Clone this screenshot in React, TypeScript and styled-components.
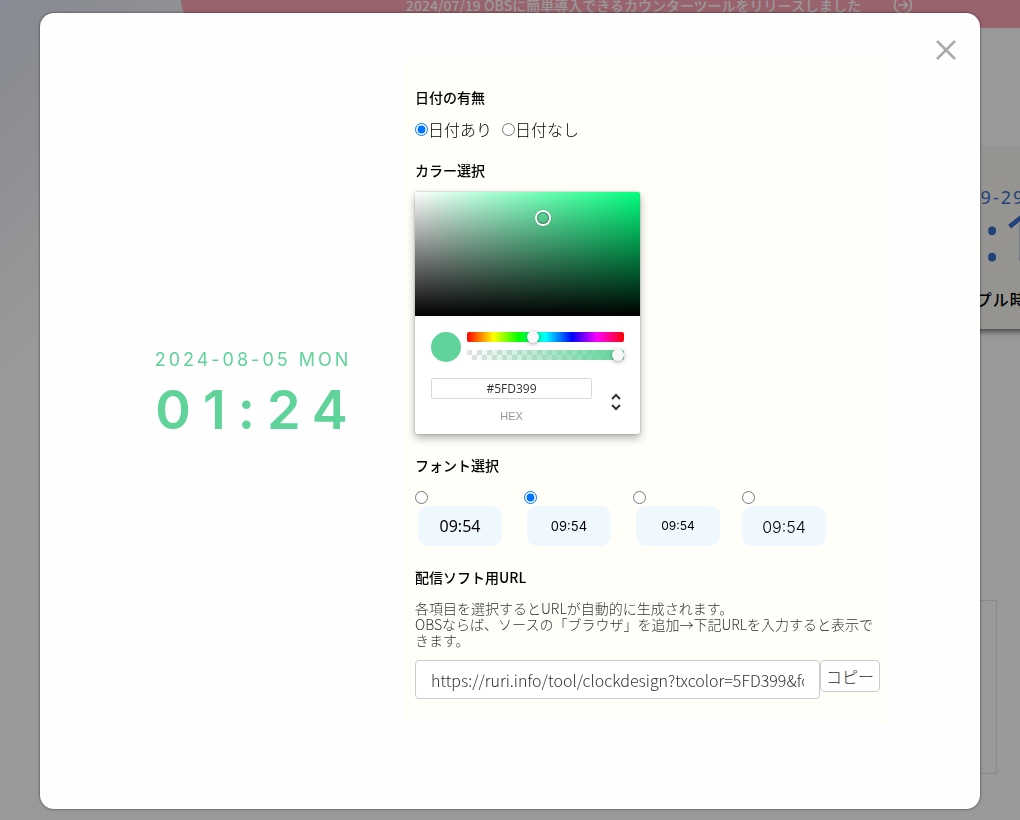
import React, { useState } from 'react';
import styled, { createGlobalStyle } from 'styled-components';

const jp = `'Noto Sans CJK JP', sans-serif`;
const accent = '#5fd399';

const GlobalStyle = createGlobalStyle`
  *, *::before, *::after { box-sizing: border-box; }
  html, body { margin: 0; height: 100%; }
  body { font-family: ${jp}; font-size: 16px; color: #000; overflow: hidden; }
  #root { height: 100%; }
  input, button { font-family: inherit; }
`;

const Page = styled.div`
  min-height: 100%;
  overflow: hidden;
  background: linear-gradient(135deg, #e1e8f8 0, #e8ebf4 70px, #fff 260px);
`;

const News = styled.a`
  display: flex;
  justify-content: center;
  align-items: flex-start;
  gap: 32px;
  height: 28px;
  margin-left: 181px;
  padding-left: 118px;
  border-bottom-left-radius: 28px;
  background: #ffa5b7;
  color: #fff;
  font-size: 14px;
  font-weight: 500;
  line-height: 10px;
  text-decoration: none;
  white-space: nowrap;
`;

const NewsIcon = styled.svg`
  width: 20px;
  height: 20px;
  margin-top: -5px;
`;

const SampleCard = styled.section`
  width: 300px;
  height: 181px;
  margin: 120px -123px 0 auto;
  padding-top: 36px;
  background: #f8f7f1;
  box-shadow: 0 3px 5px rgba(0, 0, 0, 0.5);
  white-space: nowrap;
  text-align: center;
  color: #376ecb;
  font-family: 'Noto Sans', sans-serif;
`;

const SampleDate = styled.div`
  font-size: 18px;
  line-height: 26px;
  letter-spacing: 2px;
`;

const SampleTime = styled.div`
  font-size: 64px;
  line-height: 54px;
  letter-spacing: 2px;
`;

const SampleName = styled.div`
  margin-top: 23px;
  color: #000;
  font: 500 16px/24px ${jp};
  letter-spacing: 1px;
`;

const OutlineBox = styled.div`
  height: 174px;
  margin: 271px 23px 0 181px;
  border: 1px solid #e4e4e4;
`;

const Overlay = styled.div`
  position: fixed;
  inset: 0;
  display: flex;
  padding: 13px 40px 11px;
  background: rgba(0, 0, 0, 0.4);
`;

const Modal = styled.main`
  position: relative;
  flex: 1;
  display: grid;
  grid-template-columns: minmax(0, 307fr) minmax(0, 485fr);
  align-items: start;
  padding: 44px 90px 78px 58px;
  border-radius: 14px;
  background: #fefefe;
  box-shadow: 0 0 3px rgba(0, 0, 0, 0.6);
`;

const CloseButton = styled.button`
  position: absolute;
  top: 23px;
  right: 20px;
  display: grid;
  place-items: center;
  width: 28px;
  height: 28px;
  padding: 0;
  border: 0;
  background: none;
  cursor: pointer;
`;

const Preview = styled.div`
  align-self: center;
  color: ${accent};
  text-align: center;
  font-family: Inter, sans-serif;
  white-space: nowrap;
`;

const PreviewDate = styled.div`
  font-size: 18px;
  line-height: 24px;
  letter-spacing: 3px;
  text-indent: 3px;
`;

const PreviewTime = styled.div`
  margin-top: 8px;
  font-size: 54px;
  font-weight: 600;
  line-height: 60px;
  letter-spacing: 12px;
  text-indent: 12px;
`;

const Panel = styled.form`
  display: flex;
  flex-direction: column;
  gap: 21px;
  padding: 30px 10px 24px;
  background: #fffef8;
`;

const Heading = styled.h2`
  margin: 0 0 12px;
  font-size: 14px;
  font-weight: 500;
  line-height: 20px;
`;

const Radio = styled.input`
  width: 13px;
  height: 13px;
  margin: 0;
`;

const DateChoices = styled.div`
  display: flex;
  gap: 10px;
`;

const DateLabel = styled.label`
  display: flex;
  align-items: center;
  font-weight: 300;
  line-height: 20px;
`;

const Picker = styled.div`
  width: 225px;
  border-radius: 2px;
  background: #fff;
  box-shadow: 0 0 2px rgba(0, 0, 0, 0.3), 0 4px 8px rgba(0, 0, 0, 0.3);
`;

const Saturation = styled.div`
  position: relative;
  height: 124px;
  border-radius: 2px 2px 0 0;
  background:
    linear-gradient(to top, #000, rgba(0, 0, 0, 0)),
    linear-gradient(to right, #fff, rgba(255, 255, 255, 0)),
    #00ff7f;
`;

const SaturationHandle = styled.span`
  position: absolute;
  left: 54%;
  top: 16%;
  width: 12px;
  height: 12px;
  border-radius: 50%;
  box-shadow: 0 0 0 2px #fff, inset 0 0 1px 1px rgba(0, 0, 0, 0.3), 0 0 1px 2px rgba(0, 0, 0, 0.4);
`;

const PickerBody = styled.div`
  padding: 16px 16px 12px;
`;

const PickerRow = styled.div`
  display: flex;
  gap: 6px;
`;

const Swatch = styled.div`
  width: 30px;
  height: 30px;
  border-radius: 50%;
  background: ${accent};
`;

const Sliders = styled.div`
  flex: 1;
  display: grid;
  gap: 8px;
  align-content: start;
`;

const Slider = styled.input<{ $track: string }>`
  appearance: none;
  display: block;
  width: 100%;
  height: 10px;
  margin: 0;
  border-radius: 2px;
  background: ${(p) => p.$track};
  &::-webkit-slider-thumb {
    appearance: none;
    width: 12px;
    height: 12px;
    border-radius: 50%;
    background: #f8f8f8;
    box-shadow: 0 1px 4px rgba(0, 0, 0, 0.37);
  }
`;

const hueTrack = 'linear-gradient(to right, #f00 0%, #ff0 17%, #0f0 33%, #0ff 50%, #00f 67%, #f0f 83%, #f00 100%)';
const alphaTrack = `linear-gradient(to right, rgba(95, 211, 153, 0), ${accent}), repeating-conic-gradient(#fff 0 25%, #e1e1e1 0 50%) 0 0 / 10px 10px`;

const HexRow = styled.div`
  display: flex;
  align-items: flex-start;
  padding-top: 16px;
`;

const HexLabel = styled.label`
  flex: 1;
  color: #969696;
  font: 11px/12px 'Liberation Sans', sans-serif;
  text-align: center;
`;

const HexInput = styled.input`
  display: block;
  width: 100%;
  height: 21px;
  margin-bottom: 11px;
  padding: 0;
  border: 1px solid #dadada;
  border-radius: 2px;
  background: #fff;
  color: #333;
  font: 12px/19px 'Open Sans', sans-serif;
  text-align: center;
`;

const ModeButton = styled.button`
  width: 32px;
  height: 40px;
  padding: 8px 0 0 16px;
  border: 0;
  background: none;
`;

const ModeIcon = styled.svg`
  display: block;
`;

const FontChoices = styled.div`
  display: flex;
  gap: 19px;
  padding-top: 4px;
`;

const FontChoice = styled.label`
  display: flex;
  flex-direction: column;
  gap: 2px;
  width: 90px;
  &:last-child { width: 84px; }
`;

const FontTile = styled.span<{ $font: string }>`
  align-self: center;
  width: 84px;
  height: 40px;
  border-radius: 10px;
  background: #f0f8ff;
  font: ${(p) => p.$font};
  text-align: center;
`;

const Description = styled.p`
  margin: 0 0 12px;
  padding-top: 1px;
  color: #333;
  font-size: 14px;
  font-weight: 300;
  line-height: 16px;
`;

const UrlRow = styled.div`
  display: flex;
  align-items: flex-start;
`;

const UrlInput = styled.input`
  flex: 1;
  min-width: 0;
  height: 39px;
  padding: 0 15px;
  border: 1px solid #ccc;
  border-radius: 4px;
  background: #fff;
  color: #333;
  font-size: 16px;
  font-weight: 300;
`;

const CopyButton = styled.button`
  width: 60px;
  height: 32px;
  padding: 0;
  border: 1px solid #ccc;
  border-radius: 4px;
  background: #fff;
  color: #333;
  font-size: 16px;
  font-weight: 300;
`;

const clockFonts = [
  { name: 'Noto Sans', font: `16px/40px 'Noto Sans', sans-serif` },
  { name: 'Square', font: `13px/40px Inter, sans-serif` },
  { name: 'Round', font: `12px/40px Inter, sans-serif` },
  { name: 'Light', font: `300 16px/42px Inter, sans-serif` },
];

export default function App() {
  const [showDate, setShowDate] = useState(true);
  const [font, setFont] = useState('Square');
  const [hex, setHex] = useState('#5FD399');

  return (
    <>
      <GlobalStyle />
      <Page>
        <News href="#news">
          2024/07/19 OBSに簡単導入できるカウンターツールをリリースしました
          <NewsIcon viewBox="0 0 20 20" fill="none" stroke="#fff" strokeWidth="1.6">
            <circle cx="10" cy="10" r="8.5" />
            <path d="M5 10h9M10.500 6l4 4-4 4" />
          </NewsIcon>
        </News>
        <SampleCard>
          <SampleDate>2024-09-29 SUN</SampleDate>
          <SampleTime>12:15</SampleTime>
          <SampleName>サンプル時計</SampleName>
        </SampleCard>
        <OutlineBox />
      </Page>
      <Overlay>
        <Modal role="dialog" aria-modal="true">
          <Preview>
            {showDate && <PreviewDate>2024-08-05 MON</PreviewDate>}
            <PreviewTime>01:24</PreviewTime>
          </Preview>
          <Panel onSubmit={(e) => e.preventDefault()}>
            <section>
              <Heading>日付の有無</Heading>
              <DateChoices>
                <DateLabel>
                  <Radio type="radio" name="date" checked={showDate} onChange={() => setShowDate(true)} />
                  日付あり
                </DateLabel>
                <DateLabel>
                  <Radio type="radio" name="date" checked={!showDate} onChange={() => setShowDate(false)} />
                  日付なし
                </DateLabel>
              </DateChoices>
            </section>
            <section>
              <Heading>カラー選択</Heading>
              <Picker>
                <Saturation>
                  <SaturationHandle />
                </Saturation>
                <PickerBody>
                  <PickerRow>
                    <Swatch />
                    <Sliders>
                      <Slider type="range" aria-label="色相" min={0} max={360} defaultValue={150} $track={hueTrack} />
                      <Slider type="range" aria-label="不透明度" min={0} max={100} defaultValue={100} $track={alphaTrack} />
                    </Sliders>
                  </PickerRow>
                  <HexRow>
                    <HexLabel>
                      <HexInput value={hex} onChange={(e) => setHex(e.target.value)} />
                      HEX
                    </HexLabel>
                    <ModeButton type="button" aria-label="表記の切り替え">
                      <ModeIcon width="16" height="22" viewBox="0 0 16 22" fill="none" stroke="#333" strokeWidth="2">
                        <path d="M4 8l4-4 4 4M4 14l4 4 4-4" />
                      </ModeIcon>
                    </ModeButton>
                  </HexRow>
                </PickerBody>
              </Picker>
            </section>
            <section>
              <Heading>フォント選択</Heading>
              <FontChoices>
                {clockFonts.map((f) => (
                  <FontChoice key={f.name}>
                    <Radio type="radio" name="font" checked={font === f.name} onChange={() => setFont(f.name)} />
                    <FontTile $font={f.font}>09:54</FontTile>
                  </FontChoice>
                ))}
              </FontChoices>
            </section>
            <section>
              <Heading>配信ソフト用URL</Heading>
              <Description>
                各項目を選択するとURLが自動的に生成されます。
                <br />
                OBSならば、ソースの「ブラウザ」を追加→下記URLを入力すると表示できます。
              </Description>
              <UrlRow>
                <UrlInput
                  readOnly
                  aria-label="配信ソフト用URL"
                  value="https://ruri.info/tool/clockdesign?txcolor=5FD399&font=2&date=1"
                />
                <CopyButton type="button">コピー</CopyButton>
              </UrlRow>
            </section>
          </Panel>
          <CloseButton type="button" aria-label="閉じる">
            <svg width="20" height="20" viewBox="0 0 20 20" fill="none" stroke="#aaa" strokeWidth="2.500">
              <path d="M1 1l18 18M19 1L1 19" />
            </svg>
          </CloseButton>
        </Modal>
      </Overlay>
    </>
  );
}
